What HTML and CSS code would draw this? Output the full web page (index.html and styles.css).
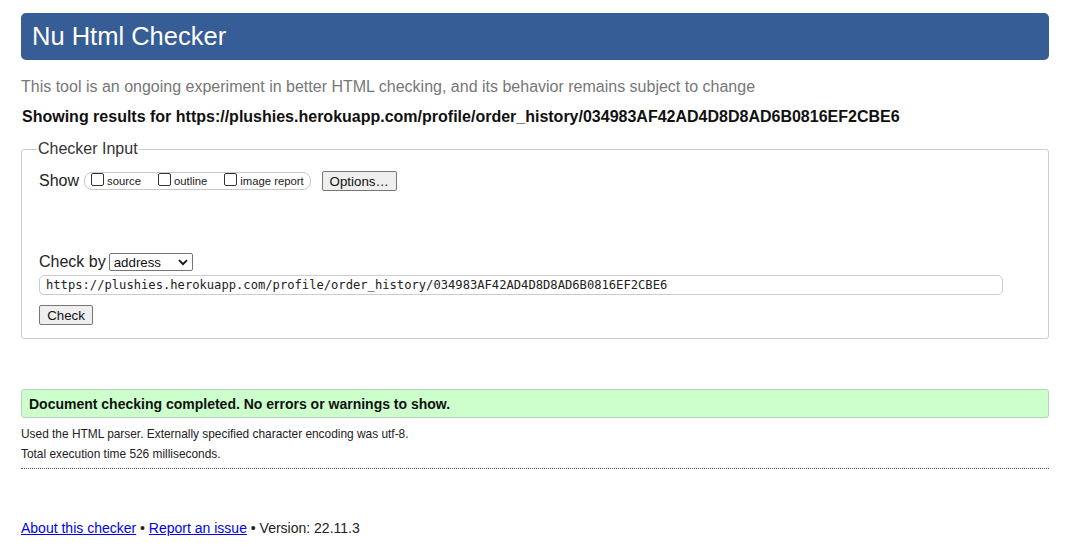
FILE: index.html
```
<!DOCTYPE html>
<html lang="en">
<head>
<meta charset="utf-8">
<title>Showing results for https://plushies.herokuapp.com/profile/order_history/034983AF42AD4D8D8AD6B0816EF2CBE6 - Nu Html Checker</title>
<link rel="stylesheet" href="styles.css">
</head>
<body>
<div class="page">
  <h1 class="title">Nu Html Checker</h1>
  <p class="subtitle">This tool is an ongoing experiment in better HTML checking, and its behavior remains subject to change</p>
  <p class="showing">Showing results for https://plushies.herokuapp.com/profile/order_history/034983AF42AD4D8D8AD6B0816EF2CBE6</p>
  <form class="form">
    <fieldset class="checker">
      <legend class="checker-legend">Checker Input</legend>
      <div class="show-row">
        <span class="show-label">Show</span>
        <fieldset class="show-options">
          <label class="opt"><input type="checkbox" class="cb">source</label>
          <label class="opt"><input type="checkbox" class="cb">outline</label>
          <label class="opt"><input type="checkbox" class="cb">image report</label>
        </fieldset>
        <button type="button" class="btn btn-options">Options…</button>
      </div>
      <div class="checkby-row">
        <span class="checkby-label">Check by</span>
        <span class="select-wrap">
          <select class="select"><option>address</option></select>
          <svg class="chev" width="10" height="7" viewBox="0 0 10 7"><path d="M1 1.2 L5 5.2 L9 1.2" fill="none" stroke="#111" stroke-width="1.8"/></svg>
        </span>
      </div>
      <div class="url-row">
        <input class="url" type="text" value="https://plushies.herokuapp.com/profile/order_history/034983AF42AD4D8D8AD6B0816EF2CBE6">
      </div>
      <div class="check-row">
        <button type="button" class="btn btn-check">Check</button>
      </div>
    </fieldset>
  </form>
  <div class="success">Document checking completed. No errors or warnings to show.</div>
  <p class="details">Used the HTML parser. Externally specified character encoding was utf-8.</p>
  <p class="details">Total execution time 526 milliseconds.</p>
  <hr class="sep">
  <p class="footer"><a href="#" class="link">About this checker</a> • <a href="#" class="link">Report an issue</a> • Version: 22.11.3</p>
</div>
</body>
</html>
```
FILE: styles.css
```
html, body {
  margin: 0;
  padding: 0;
  background: #fff;
}
body {
  font-family: "Liberation Sans", Arial, sans-serif;
  color: #111;
}
.page {
  width: 1028px;
  padding: 13px 0 0 21px;
}
.title {
  margin: 0;
  height: 47px;
  box-sizing: border-box;
  padding: 0 0 0 11px;
  display: flex;
  align-items: center;
  background: #365d95;
  color: #fff;
  font-weight: normal;
  font-size: 25.5px;
  border-radius: 5px;
}
.subtitle {
  margin: 18px 0 0;
  font-size: 16px;
  line-height: 18px;
  color: #777;
}
.showing {
  margin: 12px 0 0 1px;
  font-size: 16px;
  line-height: 18px;
  font-weight: bold;
  color: #111;
}
.form {
  margin: 14px 0 0;
}
.checker {
  margin: 0;
  padding: 0 17px 13px 17px;
  border: 1px solid #ccc;
  border-radius: 3px;
}
.checker-legend {
  padding: 0 1px;
  margin-left: -2px;
  font-size: 16px;
  line-height: 18px;
  color: #333;
}
.show-row {
  margin-top: 13px;
  display: flex;
  align-items: center;
  height: 20px;
}
.show-label {
  font-size: 16px;
  color: #222;
  margin-right: 5px;
}
.show-options {
  margin: 0;
  padding: 0 6px 0 6px;
  height: 18px;
  box-sizing: border-box;
  border: 1px solid #c8c8c8;
  border-radius: 8px;
  display: flex;
  align-items: center;
  gap: 17px;
}
.opt {
  display: flex;
  align-items: center;
  font-size: 11.3px;
  color: #222;
}
.cb {
  appearance: none;
  -webkit-appearance: none;
  width: 13px;
  height: 13px;
  margin: 0 3px 0 0;
  border: 1px solid #333;
  border-radius: 2px;
  background: #fff;
  position: relative;
  top: -2px;
}
.btn {
  font-family: "Liberation Sans", Arial, sans-serif;
  font-size: 13.3px;
  color: #111;
  background: #efefef;
  border: 1px solid #767676;
  border-radius: 2px;
  height: 20px;
  padding: 0 6px;
  box-sizing: border-box;
}
.btn-options {
  margin-left: 11px;
  width: 75px;
}
.checkby-row {
  margin-top: 62px;
  display: flex;
  align-items: center;
  height: 18px;
}
.checkby-label {
  font-size: 16px;
  color: #222;
  margin-right: 3px;
}
.select-wrap {
  position: relative;
  display: inline-flex;
}
.select {
  appearance: none;
  -webkit-appearance: none;
  width: 84px;
  height: 18px;
  box-sizing: border-box;
  border: 1px solid #767676;
  border-radius: 2px;
  background: #fff;
  padding: 0 0 0 4px;
  font-family: "Liberation Sans", Arial, sans-serif;
  font-size: 13.3px;
  color: #111;
}
.chev {
  position: absolute;
  right: 5px;
  top: 6px;
  pointer-events: none;
}
.url-row {
  margin-top: 4px;
}
.url {
  width: 964px;
  height: 20px;
  box-sizing: border-box;
  border: 1px solid #ccc;
  border-radius: 5px;
  padding: 0 0 0 6px;
  font-family: "DejaVu Sans Mono", "Liberation Mono", monospace;
  font-size: 12.15px;
  color: #222;
  background: #fff;
}
.check-row {
  margin-top: 10px;
}
.btn-check {
  width: 54px;
  font-size: 13.3px;
}
.success {
  margin-top: 50px;
  height: 29px;
  box-sizing: border-box;
  display: flex;
  align-items: center;
  padding-left: 7px;
  background: #ccffcc;
  border: 1px solid #b8d4b8;
  border-radius: 3px;
  font-weight: bold;
  font-size: 14px;
  color: #111;
}
.details {
  margin: 0;
  font-size: 11.9px;
  line-height: 14px;
  color: #222;
}
.success + .details {
  margin-top: 9px;
}
.details + .details {
  margin-top: 6px;
}
.sep {
  margin: 7px 0 0;
  border: 0;
  border-top: 1px dotted #555;
  height: 0;
}
.footer {
  margin: 51px 0 0;
  font-size: 14px;
  line-height: 16px;
  color: #222;
}
.link {
  color: #0000ee;
  text-decoration: underline;
}
```
